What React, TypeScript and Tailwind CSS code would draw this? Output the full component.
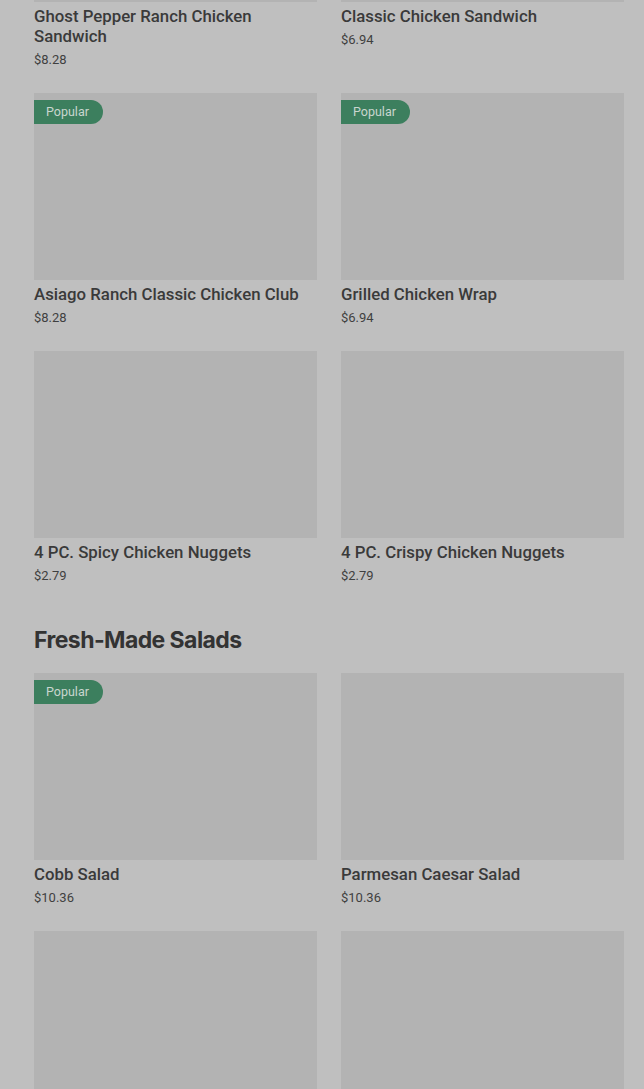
type Item = { name: string; price: string; popular?: boolean }

const sandwiches: Item[] = [
  { name: 'Ghost Pepper Ranch Chicken Sandwich', price: '$8.28' },
  { name: 'Classic Chicken Sandwich', price: '$6.94' },
  { name: 'Asiago Ranch Classic Chicken Club', price: '$8.28', popular: true },
  { name: 'Grilled Chicken Wrap', price: '$6.94', popular: true },
  { name: '4 PC. Spicy Chicken Nuggets', price: '$2.79' },
  { name: '4 PC. Crispy Chicken Nuggets', price: '$2.79' },
]

const salads: Item[] = [
  { name: 'Cobb Salad', price: '$10.36', popular: true },
  { name: 'Parmesan Caesar Salad', price: '$10.36' },
  { name: 'Apple Pecan Salad', price: '$10.36' },
  { name: 'Southwest Avocado Salad', price: '$10.36' },
]

function MenuCard({ item }: { item: Item }) {
  return (
    <div className="flex flex-col">
      <div className="relative h-[187px] w-full bg-[#b3b3b3]">
        {item.popular && (
          <span className="absolute left-0 top-[7px] flex h-6 items-center rounded-r-full bg-[#3c7f5e] pl-3 pr-[14px] text-[12.5px] text-[#c9d6cf]">
            Popular
          </span>
        )}
      </div>
      <h3 className="mt-1 text-[16.8px] font-medium leading-5 text-[#3a3a3a]">{item.name}</h3>
      <p className="mt-1 text-[13px] leading-5 text-[#3f3f3f]">{item.price}</p>
    </div>
  )
}

export default function App() {
  return (
    <div
      className="min-h-[1089px] overflow-hidden bg-[#bfbfbf] pl-[34px] pr-5"
      style={{ fontFamily: 'Roboto, "Liberation Sans", sans-serif' }}
    >
      <div className="-mt-[185px]">
        <section className="grid grid-cols-2 gap-x-6 gap-y-[23px]">
          {sandwiches.map((item) => (
            <MenuCard key={item.name} item={item} />
          ))}
        </section>

        <h2
          className="mt-[38px] mb-[17px] text-[23px] font-bold leading-8 tracking-tight text-[#333333]"
          style={{ fontFamily: 'Inter, "Liberation Sans", sans-serif' }}
        >
          Fresh-Made Salads
        </h2>

        <section className="grid grid-cols-2 gap-x-6 gap-y-[23px]">
          {salads.map((item) => (
            <MenuCard key={item.name} item={item} />
          ))}
        </section>
      </div>
    </div>
  )
}
